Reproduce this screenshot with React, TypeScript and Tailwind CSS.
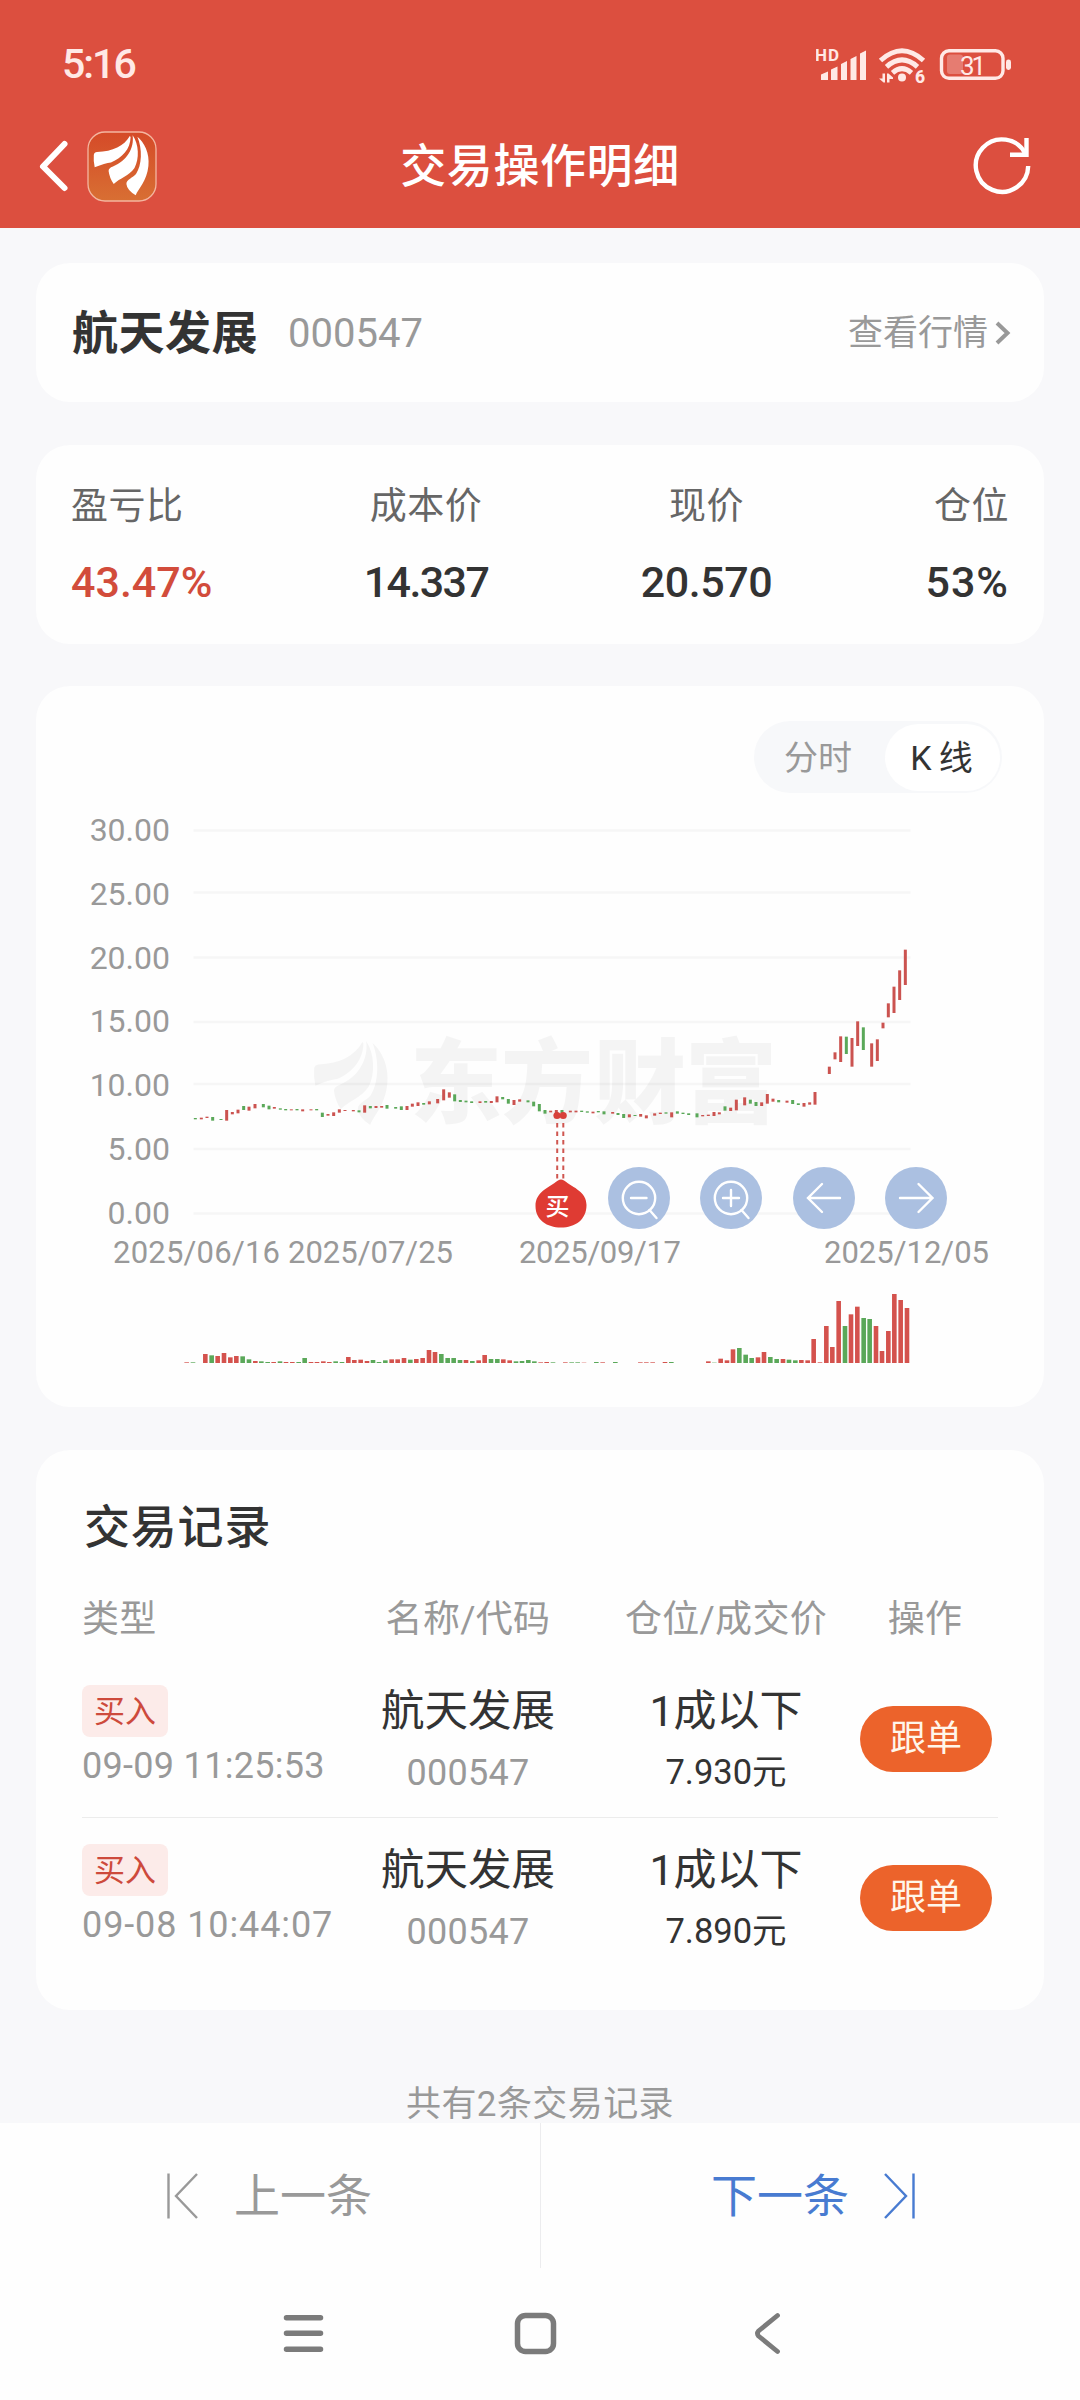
import type { ReactNode } from "react";

type Tone = "r" | "g";
/** x centre, top and bottom, in thirds of a pixel from the plot origin. */
type Candle = [number, number, number, Tone];
type Volume = [number, number, Tone];

const RED = "#cb5350";
const GREEN = "#5aa859";

const candles: Candle[] = [
  [106, 234, 238, "g"], [124, 233, 238, "r"], [141, 230, 234, "r"], [158, 231, 242, "g"],
  [183, 237, 240, "g"], [200, 210, 242, "r"], [217, 216, 223, "r"], [234, 209, 220, "r"],
  [251, 198, 210, "g"], [267, 200, 212, "r"], [285, 192, 205, "r"], [310, 192, 202, "g"],
  [327, 197, 208, "g"], [343, 201, 206, "r"], [361, 205, 209, "g"], [377, 207, 211, "g"],
  [394, 208, 211, "r"], [411, 207, 211, "g"], [428, 208, 214, "r"], [453, 208, 211, "r"],
  [470, 207, 211, "g"], [487, 218, 231, "g"], [504, 222, 227, "r"], [521, 217, 228, "r"],
  [538, 208, 218, "r"], [555, 210, 213, "r"], [580, 210, 214, "r"], [597, 211, 217, "g"],
  [614, 196, 218, "r"], [631, 198, 205, "g"], [648, 198, 204, "r"], [665, 198, 203, "r"],
  [681, 195, 206, "g"], [707, 201, 206, "g"], [724, 199, 210, "g"], [741, 198, 210, "r"],
  [757, 191, 200, "r"], [774, 187, 198, "r"], [791, 189, 194, "g"], [808, 184, 193, "r"],
  [833, 177, 190, "r"], [851, 148, 181, "r"], [868, 157, 173, "r"], [884, 163, 184, "g"],
  [901, 180, 186, "g"], [918, 182, 187, "g"], [935, 184, 189, "g"], [960, 184, 189, "r"],
  [977, 183, 188, "g"], [994, 183, 189, "r"], [1011, 169, 187, "r"], [1028, 171, 178, "g"],
  [1045, 177, 191, "g"], [1062, 180, 195, "r"], [1079, 178, 185, "r"], [1104, 181, 187, "g"],
  [1121, 185, 199, "g"], [1138, 192, 214, "g"], [1155, 210, 221, "g"], [1172, 212, 217, "r"],
  [1189, 210, 219, "r"], [1206, 210, 219, "g"], [1231, 212, 217, "r"], [1248, 212, 217, "r"],
  [1265, 212, 216, "g"], [1282, 214, 218, "g"], [1299, 215, 220, "r"], [1315, 213, 217, "g"],
  [1332, 214, 223, "g"], [1358, 216, 221, "r"], [1374, 219, 225, "g"], [1391, 222, 234, "g"],
  [1408, 223, 232, "r"], [1425, 225, 228, "g"], [1442, 222, 230, "r"], [1459, 226, 235, "r"],
  [1484, 220, 227, "r"], [1501, 218, 222, "r"], [1518, 217, 221, "g"], [1535, 217, 232, "r"],
  [1552, 214, 221, "g"], [1569, 218, 222, "g"], [1586, 220, 225, "g"], [1611, 220, 232, "g"],
  [1628, 225, 229, "r"], [1645, 224, 228, "r"], [1662, 216, 228, "r"], [1678, 217, 223, "r"],
  [1695, 199, 212, "g"], [1712, 203, 213, "r"], [1729, 179, 211, "r"], [1754, 172, 196, "r"],
  [1771, 179, 191, "g"], [1788, 186, 198, "g"], [1805, 187, 198, "r"], [1822, 162, 191, "r"],
  [1839, 176, 185, "r"], [1856, 180, 187, "g"], [1881, 182, 188, "r"], [1898, 180, 192, "g"],
  [1915, 190, 195, "g"], [1932, 189, 200, "r"], [1949, 187, 194, "r"], [1965, 156, 194, "r"],
  [2008, 80, 102, "r"], [2025, 37, 58, "r"], [2042, -11, 66, "r"], [2059, -10, 42, "g"],
  [2076, -6, 80, "r"], [2093, -56, 18, "r"], [2110, -38, 30, "g"], [2135, 10, 80, "r"],
  [2152, -2, 63, "r"], [2169, -52, -35, "r"], [2185, -110, -68, "r"], [2202, -160, -81, "r"],
  [2219, -209, -120, "r"], [2236, -271, -165, "r"],
];

const volumes: Volume[] = [
  [80, 2, "r"], [99, 2, "g"], [136, 27, "r"], [155, 23, "g"], [173, 21, "r"],
  [192, 30, "r"], [211, 17, "r"], [229, 21, "r"], [248, 20, "g"], [267, 11, "g"], [286, 6, "r"],
  [304, 5, "g"], [323, 3, "g"], [341, 3, "r"], [360, 5, "g"], [378, 3, "r"], [397, 3, "r"],
  [416, 3, "g"], [434, 15, "g"], [453, 3, "r"], [471, 3, "r"], [490, 5, "r"], [508, 3, "r"],
  [527, 5, "g"], [546, 3, "g"], [565, 18, "r"], [583, 9, "r"], [602, 10, "r"], [621, 6, "r"],
  [639, 9, "g"], [657, 3, "g"], [676, 8, "g"], [695, 11, "r"], [713, 11, "r"], [732, 15, "r"],
  [751, 10, "g"], [769, 12, "r"], [788, 15, "r"], [807, 39, "r"], [825, 33, "r"], [844, 27, "g"],
  [863, 15, "g"], [881, 15, "g"], [900, 9, "g"], [918, 9, "r"], [937, 6, "g"], [956, 8, "r"],
  [974, 24, "r"], [993, 12, "g"], [1012, 12, "g"], [1030, 11, "r"], [1049, 8, "r"], [1068, 5, "g"],
  [1086, 6, "g"], [1105, 9, "g"], [1123, 5, "g"], [1142, 2, "r"], [1160, 3, "r"], [1179, 2, "g"],
  [1216, 2, "r"], [1235, 2, "g"], [1253, 2, "g"], [1272, 1, "r"], [1309, 3, "g"], [1328, 2, "r"],
  [1366, 3, "g"], [1441, 2, "r"], [1459, 2, "r"], [1478, 2, "r"],
  [1515, 3, "r"], [1534, 3, "g"], [1645, 5, "r"], [1663, 1, "g"], [1682, 13, "r"], [1701, 8, "r"],
  [1719, 41, "r"], [1738, 45, "g"], [1757, 25, "g"], [1775, 15, "g"], [1794, 17, "r"], [1812, 33, "r"],
  [1831, 18, "g"], [1850, 12, "g"], [1869, 12, "r"], [1887, 10, "g"], [1906, 8, "g"], [1924, 9, "r"],
  [1943, 8, "r"], [1961, 72, "r"], [1980, 2, "r"], [1999, 111, "r"], [2017, 48, "r"], [2036, 186, "r"],
  [2055, 111, "g"], [2073, 146, "r"], [2092, 169, "r"], [2111, 135, "g"], [2129, 132, "g"],
  [2148, 111, "r"], [2166, 36, "r"], [2185, 96, "r"], [2203, 207, "r"], [2222, 189, "r"], [2241, 165, "r"],
];

const priceTicks = [
  { label: "30.00", y: 144.5, text: 155 },
  { label: "25.00", y: 206.5, text: 219 },
  { label: "20.00", y: 271.5, text: 283 },
  { label: "15.00", y: 336, text: 346 },
  { label: "10.00", y: 398, text: 410 },
  { label: "5.00", y: 463, text: 474 },
  { label: "0.00", y: 527.5, text: 538 },
];

const dateTicks = [
  { label: "2025/06/16", x: 77, width: 167 },
  { label: "2025/07/25", x: 252, width: 165 },
  { label: "2025/09/17", x: 483, width: 162 },
  { label: "2025/12/05", x: 788, width: 165 },
];

const stats = [
  { label: "盈亏比", value: "43.47%", box: "w-[140px] items-start", text: "text-[#d24c3b] tracking-[0px]" },
  { label: "成本价", value: "14.337", box: "w-[124px] items-center", text: "text-[#333] tracking-[-1.600px]" },
  { label: "现价", value: "20.570", box: "w-[131px] items-center", text: "text-[#333] tracking-[-0.400px]" },
  { label: "仓位", value: "53%", box: "w-[84px] items-end", text: "text-[#333] tracking-[1px]" },
];

const records = [
  { time: "09-09 11:25:53", tracking: "tracking-[0.300px]", name: "航天发展", code: "000547", position: "1成以下", price: "7.930元" },
  { time: "09-08 10:44:07", tracking: "tracking-[0.900px]", name: "航天发展", code: "000547", position: "1成以下", price: "7.890元" },
];

function Leaves() {
  return (
    <>
      <path d="M42.8 5C37 15 26 20.5 10 21Q7 21.3 6.8 24Q6.3 30 7.7 36.3Q18 32 24 31.5C35 27 43.5 18 43.6 6Z" />
      <path d="M45.6 4.3C47.5 17 40 30 26 35.5Q21.5 37 21.6 40Q22.5 47 26.7 53C33 47 42 45 47.5 37C52.5 28 52 13 45.6 4.3Z" />
      <path d="M50.4 5.7C55.5 18 55 34 49 43C46 47 39.4 48 39.4 53Q40 59 48.7 64.3C51 58 60 50 61.4 35C63 22 57 11 50.4 5.7Z" />
    </>
  );
}

function StatusBar() {
  return (
    <div className="flex h-[104px] items-center justify-between pt-[25px] pr-[68px] pl-[62px] text-[#ffe9e6]">
      <span className="text-[41px] leading-none font-medium tracking-[-2px]">5:16</span>
      <svg width="196" height="44" viewBox="816 42 196 44" fill="currentColor">
        <text x="815" y="60" fontSize="17" fontWeight="700" textLength="24">HD</text>
        <path d="M821 73.5L828 70.5V79H821ZM831 68.5L837.500 65.500V79H831ZM841 63L847 60V79H841ZM850.500 58L856.500 55V79H850.500ZM860 52.500L866 49.500V79H860Z" />
        <g fill="none" stroke="currentColor" strokeWidth="5">
          <path d="M880.500 59.500Q902 40 923.500 59.500" />
          <path d="M886.500 65.800Q902 52 917.500 65.800" />
          <path d="M892.500 71.800Q902 63.500 911.500 71.800" />
        </g>
        <circle cx="902" cy="76.500" r="4" />
        <path d="M879 77.500H882.500V72.500H885V81.500H883.500ZM887 81.500V72.500H888.500L893 76.500V78H889.500V81.500Z" />
        <text x="915" y="82" fontSize="17.500" fontWeight="800">6</text>
        <rect x="941.500" y="49.800" width="61.500" height="27.500" rx="7.500" fill="none" stroke="currentColor" strokeWidth="3.400" />
        <rect x="947" y="53.500" width="16" height="19.500" rx="3" fill="#e67c71" />
        <rect x="1006" y="58.500" width="5" height="10.500" rx="2.400" />
        <text x="960" y="73.500" fontSize="26" textLength="26">31</text>
      </svg>
    </div>
  );
}

function Header() {
  return (
    <header className="h-[228px] bg-[#dc4f3f] text-white">
      <StatusBar />
      <div className="grid h-[124px] grid-cols-3 items-center">
        <div className="flex items-center pb-[1px] pl-[38px]">
          <svg width="32" height="56" viewBox="0 0 32 56" fill="none" stroke="currentColor" strokeWidth="6" strokeLinecap="round" strokeLinejoin="round">
            <path d="M26.500 6L5 28.500L26.500 50" />
          </svg>
          <svg className="ml-[16px]" width="72" height="72" viewBox="-1 -1 72 72" fill="#fff">
            <defs>
              <linearGradient id="logo" x1="0" y1="0" x2="0" y2="1">
                <stop offset="0" stopColor="#d54a28" />
                <stop offset="1" stopColor="#d86f33" />
              </linearGradient>
            </defs>
            <rect x="1" y="1" width="68" height="69" rx="17" fill="url(#logo)" stroke="#f4b6a0" strokeWidth="1.300" />
            <Leaves />
          </svg>
        </div>
        <h1 className="text-center text-[46px] leading-none font-medium tracking-[0.600px] whitespace-nowrap">交易操作明细</h1>
        <svg className="mr-[46px] justify-self-end" width="64" height="64" viewBox="970 134 64 64" fill="none" stroke="currentColor" strokeWidth="4.400">
          <path d="M1028.200 166A26.200 26.200 0 1 1 1025.500 154" />
          <path d="M1026.500 138V154.700H1010" />
        </svg>
      </div>
    </header>
  );
}

function Card({ className, children }: { className: string; children: ReactNode }) {
  return <section className={`mx-9 rounded-[34px] bg-[#fefefe] ${className}`}>{children}</section>;
}

function PriceChart() {
  return (
    <svg className="absolute inset-0" width="1008" height="721" viewBox="0 0 1008 721">
      {priceTicks.map((t) => (
        <g key={t.label}>
          <rect x="157.500" y={t.y - 1.2} width="717" height="2.400" fill="#f6f6f6" />
          <text x="134" y={t.text} fontSize="32" fill="#999" textAnchor="end">{t.label}</text>
        </g>
      ))}
      <g fill="#000" fillOpacity="0.038">
        <g transform="translate(269 349) scale(1.34 1.4)">
          <Leaves />
        </g>
        <text x="374 465 558 649" y="430" fontSize="92" fontWeight="900">东方财富</text>
      </g>
      {candles.map(([x, top, bottom, tone]) => (
        <rect key={x} x={124 + x / 3 - 1.5} y={354 + top / 3} width="3" height={(bottom - top) / 3} fill={tone === "r" ? RED : GREEN} />
      ))}
      {volumes.map(([x, h, tone]) => (
        <rect key={x} x={124 + x / 3 - 2.3} y={677 - h / 3} width="4.600" height={h / 3} fill={tone === "r" ? "#d4524d" : GREEN} />
      ))}
      {dateTicks.map((d) => (
        <text key={d.label} x={d.x} y="576.500" fontSize="31" fill="#999" textLength={d.width}>{d.label}</text>
      ))}
      <g stroke="#cf5650" strokeWidth="2" strokeDasharray="4.500 4">
        <path d="M521.200 437V496" />
        <path d="M527.300 437V496" />
      </g>
      <circle cx="521" cy="429.500" r="3.600" fill="#d8403a" />
      <circle cx="527.200" cy="429.500" r="3.600" fill="#d8403a" />
      <path d="M522 494.500Q525 492.500 528 494.500C538 502 550.500 506 550.500 519C550.500 534 539 541.500 525 541.500C511 541.500 499.500 534 499.500 520C499.500 506 512 502 522 494.500Z" fill="#df3b33" />
      <text x="521.500" y="528.500" fontSize="24" fontWeight="500" fill="#fff" textAnchor="middle">买</text>
    </svg>
  );
}

function RoundButton({ children }: { children: ReactNode }) {
  return (
    <button className="flex size-[62px] items-center justify-center rounded-full bg-[#a6bddf]/95">
      <svg width="62" height="62" viewBox="0 0 62 62" fill="none" stroke="#fff" strokeWidth="2.400" strokeLinecap="round">
        {children}
      </svg>
    </button>
  );
}

function ChartCard() {
  return (
    <Card className="relative mt-[42px] h-[721px]">
      <PriceChart />
      <div className="relative flex justify-end pt-[35px] pr-[42px]">
        <div className="flex h-[72px] w-[248px] items-center rounded-full bg-[#f7f8fa] text-[34px] leading-none">
          <span className="flex-1 pt-[2px] pr-[3px] text-center text-[#999]">分时</span>
          <span className="mr-[2px] flex h-[67px] w-[115px] items-center justify-center rounded-full bg-white pt-[2px] pr-[2px] text-[#333]">K&thinsp;线</span>
        </div>
      </div>
      <div className="absolute top-[481px] left-[572px] flex gap-[30.300px]">
        <RoundButton>
          <circle cx="31" cy="31" r="16.200" />
          <path d="M23 31H38.500M41.500 43L48.500 51" />
        </RoundButton>
        <RoundButton>
          <circle cx="31" cy="31" r="16.200" />
          <path d="M23 31H39M31 23V39M41.500 43L48.500 51" />
        </RoundButton>
        <RoundButton>
          <path d="M47 31H15M29 17L15 31L29 45" />
        </RoundButton>
        <RoundButton>
          <path d="M15 31H47M33.500 17L47.500 31L33.500 45" />
        </RoundButton>
      </div>
    </Card>
  );
}

function RecordRow({ r }: { r: (typeof records)[number] }) {
  return (
    <li className="grid h-[159px] grid-cols-[256px_260px_256px_144px] border-b border-[#ececec] leading-none last:border-b-0">
      <div className="pt-[26px]">
        <span className="flex h-[52px] w-[86px] items-center justify-center rounded-lg bg-[#fcebe9] text-[31px] text-[#cd4a3c]">买入</span>
        <div className={`mt-[11px] text-[36px] whitespace-nowrap text-[#999] ${r.tracking}`}>{r.time}</div>
      </div>
      <div className="pt-[31px] text-center">
        <div className="text-[43.500px] text-[#333]">{r.name}</div>
        <div className="mt-[21px] text-[36px] tracking-[0.300px] text-[#999]">{r.code}</div>
      </div>
      <div className="pt-[31px] text-center text-[#333]">
        <div className="text-[43px]">{r.position}</div>
        <div className="mt-[22px] text-[34.500px]">{r.price}</div>
      </div>
      <div className="pt-[47px] pl-1.5">
        <button className="h-[66px] w-[132px] rounded-full bg-[#ec632b] text-[36px] text-[#fff6ea]">跟单</button>
      </div>
    </li>
  );
}

function Records() {
  return (
    <Card className="mt-[43px] h-[560px] px-[46px] pt-[54px]">
      <h2 className="pl-[2px] text-[46px] leading-none font-medium tracking-[0.800px] text-[#333]">交易记录</h2>
      <div className="mt-[51px] grid grid-cols-[256px_260px_256px_142px] text-center text-[37px] leading-none tracking-[0.300px] text-[#999]">
        <span className="text-left">类型</span>
        <span>名称/代码</span>
        <span>仓位/成交价</span>
        <span>操作</span>
      </div>
      <ul className="mt-[21px]">
        {records.map((r) => (
          <RecordRow key={r.time} r={r} />
        ))}
      </ul>
    </Card>
  );
}

function Pager() {
  return (
    <div className="grid h-[145px] grid-cols-2 text-[46px] leading-none">
      <button className="flex items-center gap-[35px] pl-[165px] text-[#999]">
        <svg width="34" height="48" viewBox="0 0 34 48" fill="none" stroke="currentColor" strokeWidth="2.400">
          <path d="M3.500 1.500V46.500M32 2L11 24L32 46" />
        </svg>
        上一条
      </button>
      <button className="flex items-center gap-[34px] border-l border-[#ececee] pl-[170px] text-[#487bd1]">
        下一条
        <svg width="34" height="48" viewBox="0 0 34 48" fill="none" stroke="currentColor" strokeWidth="2.400">
          <path d="M30.500 1.500V46.500M2 2L23 24L2 46" />
        </svg>
      </button>
    </div>
  );
}

function SystemNav() {
  return (
    <nav className="flex h-[132px] items-center pl-[280px] text-[#7b7b7b]">
      <svg width="520" height="50" viewBox="280 2309 520 50" fill="none" stroke="currentColor" strokeWidth="5.500" strokeLinecap="round" strokeLinejoin="round">
        <path d="M286.500 2317.700H320.500M286.500 2333.300H320.500M286.500 2349.300H320.500" />
        <rect x="517.500" y="2315.500" width="36" height="36" rx="8" />
        <path d="M777.500 2315.500L758.500 2331Q756.500 2333.500 758.500 2336L777.500 2351.500" strokeWidth="4.800" />
      </svg>
    </nav>
  );
}

export default function App() {
  return (
    <div className="flex h-[2400px] w-[1080px] flex-col overflow-hidden bg-[#f8f8fa] font-['Roboto','Noto_Sans_CJK_SC',sans-serif]">
      <Header />
      <main className="flex-1">
        <Card className="mt-[35px] flex h-[139px] items-center pr-[32px] pl-[36px] leading-none">
          <span className="text-[46px] font-bold tracking-[0.500px] text-[#333]">航天发展</span>
          <span className="ml-[30px] pt-[2px] text-[40px] text-[#999]">000547</span>
          <span className="ml-auto pt-[2px] text-[35px] text-[#999]">查看行情</span>
          <svg className="ml-[6px]" width="18" height="26" viewBox="0 0 18 26" fill="none" stroke="#999" strokeWidth="4">
            <path d="M3 3L13.500 13L3 23" />
          </svg>
        </Card>
        <Card className="mt-[43px] flex h-[199px] justify-between pt-[43px] pr-[35px] pl-[35px] leading-none">
          {stats.map((s) => (
            <div key={s.label} className={`flex flex-col whitespace-nowrap ${s.box}`}>
              <span className="text-[37px] tracking-[0.500px] text-[#666]">{s.label}</span>
              <span className={`mt-[36px] text-[43px] font-medium ${s.text}`}>{s.value}</span>
            </div>
          ))}
        </Card>
        <ChartCard />
        <Records />
        <p className="mt-[77px] text-center text-[35px] leading-none tracking-[0.400px] text-[#999]">共有2条交易记录</p>
      </main>
      <footer className="bg-[#fefefe]">
        <Pager />
        <SystemNav />
      </footer>
    </div>
  );
}
